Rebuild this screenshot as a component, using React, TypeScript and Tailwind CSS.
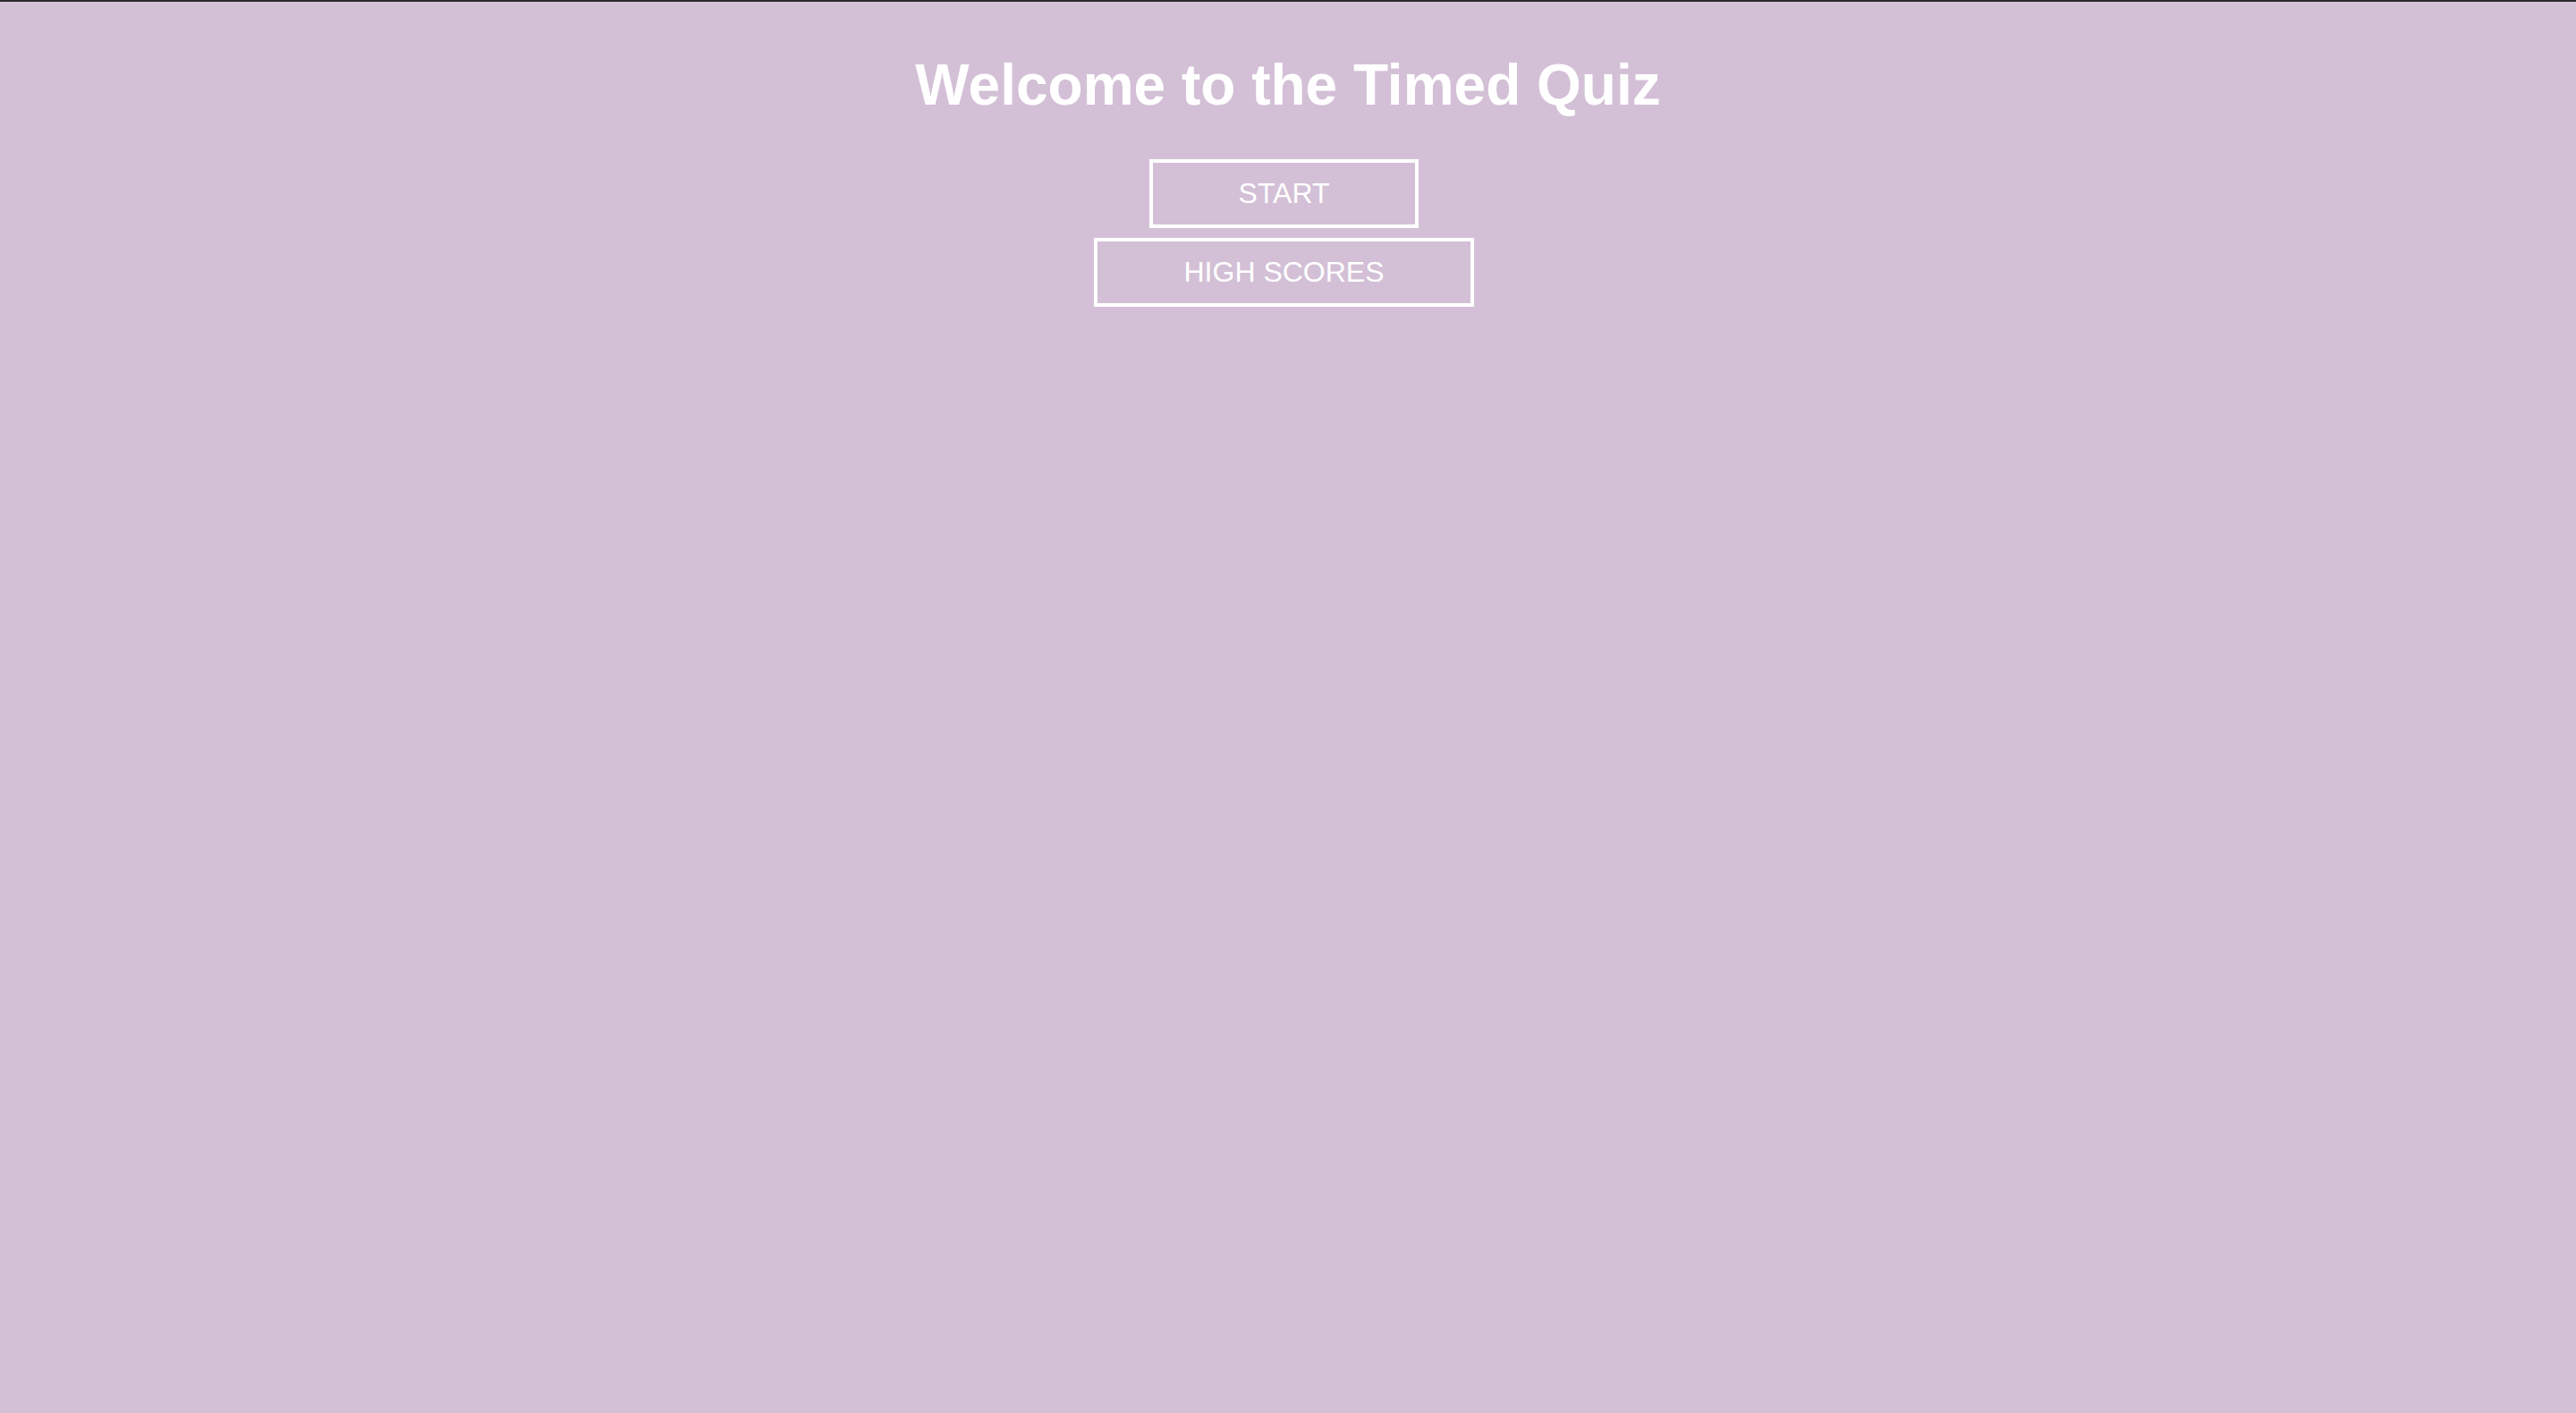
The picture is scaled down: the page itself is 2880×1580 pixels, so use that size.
export default function App() {
  return (
    <div className="min-h-screen w-full bg-[#d3c0d6] border-t-2 border-[#2a2a2a] font-['Liberation_Sans',Arial,sans-serif] text-white">
      <div className="flex flex-col items-center">
        <h1 className="mt-[57px] text-[64px] font-bold leading-[1.15]">
          Welcome to the Timed Quiz
        </h1>
        <div className="mt-[45px] flex flex-col items-center gap-[11px]">
          <button className="mr-[9px] border-4 border-white px-[96px] py-[16px] text-[32px] leading-[37px] text-white">
            START
          </button>
          <button className="mr-[9px] border-4 border-white px-[96px] py-[16px] text-[32px] leading-[37px] text-white">
            HIGH SCORES
          </button>
        </div>
      </div>
    </div>
  );
}
